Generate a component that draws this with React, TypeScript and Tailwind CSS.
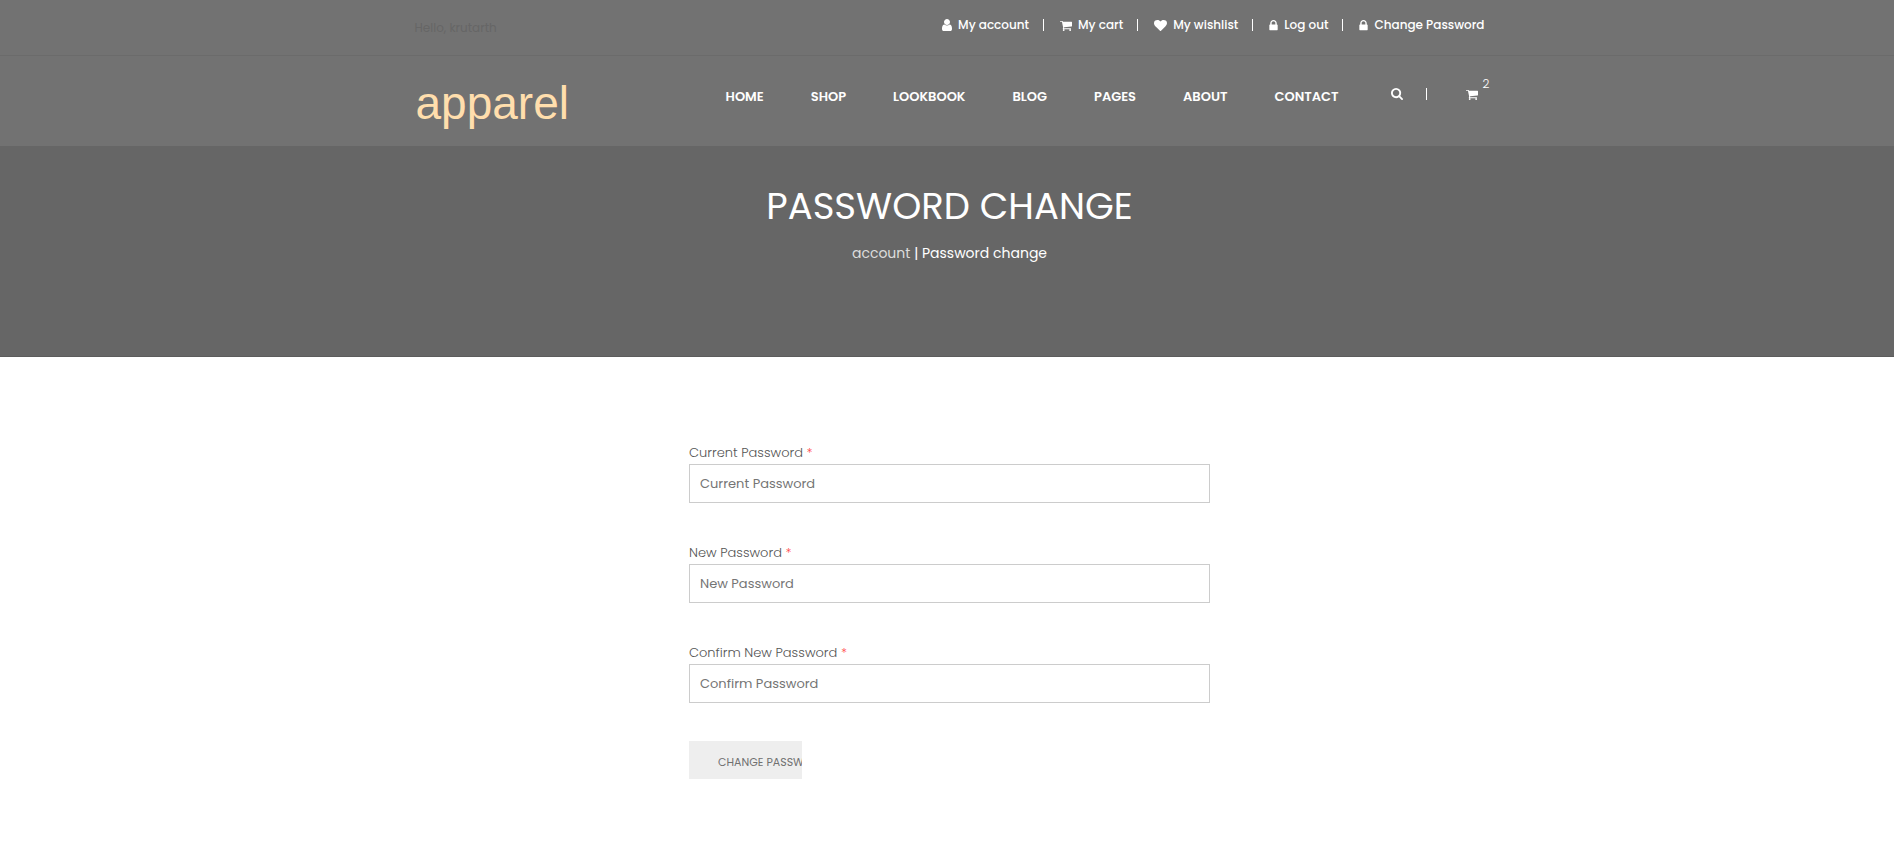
import React from "react";

const ICONS = {
  user: {
    box: "256 0 1280 1792",
    size: "h-[14px] w-[10px]",
    d: "M1536 1399q0 109-62.5 187t-150.5 78h-854q-88 0-150.5-78t-62.5-187q0-85 8.5-160.5t31.5-152 58.5-131 94-89 134.5-34.5q131 128 313 128t313-128q76 0 134.5 34.5t94 89 58.5 131 31.5 152 8.5 160.5zm-256-887q0 159-112.5 271.5t-271.5 112.5-271.5-112.5-112.5-271.5 112.5-271.5 271.5-112.5 271.5 112.5 112.5 271.5z",
  },
  cart: {
    box: "64 0 1664 1792",
    size: "h-[13px] w-[12px]",
    d: "M704 1536q0 52-38 90t-90 38-90-38-38-90 38-90 90-38 90 38 38 90zm896 0q0 52-38 90t-90 38-90-38-38-90 38-90 90-38 90 38 38 90zm128-1088v512q0 24-16.500 42.500t-40.500 21.500l-1044 122q13 60 13 70 0 16-24 64h920q26 0 45 19t19 45-19 45-45 19h-1024q-26 0-45-19t-19-45q0-11 8-31.500t16-36 21.500-40 15.500-29.500l-177-823h-204q-26 0-45-19t-19-45 19-45 45-19h256q16 0 28.500 6.500t19.500 15.500 13 24.500 8 26 5.500 29.500 4.500 26h1201q26 0 45 19t19 45z",
  },
  heart: {
    box: "0 0 1792 1792",
    size: "size-[13px]",
    d: "M896 1664q-26 0-44-18l-624-602q-10-8-27.500-26t-55.500-65.500-68-97.500-53.500-121-23.500-138q0-220 127-344t351-124q62 0 126.500 21.500t120 58 95.500 68.500 76 68q36-36 76-68t95.500-68.500 120-58 126.500-21.500q224 0 351 124t127 344q0 221-229 450l-623 600q-18 18-44 18z",
  },
  lock: {
    box: "320 0 1152 1792",
    size: "h-[13px] w-[9px]",
    d: "M640 768h512v-192q0-106-75-181t-181-75-181 75-75 181v192zm832 96v576q0 40-28 68t-68 28h-960q-40 0-68-28t-28-68v-576q0-40 28-68t68-28h32v-192q0-184 132-316t316-132 316 132 132 316v192h32q40 0 68 28t28 68z",
  },
  search: {
    box: "64 128 1664 1664",
    size: "size-[12px]",
    d: "M1216 832q0-185-131.500-316.500t-316.500-131.500-316.500 131.500-131.500 316.500 131.500 316.500 316.500 131.500 316.500-131.500 131.500-316.500zm512 832q0 52-38 90t-90 38q-54 0-90-38l-343-342q-179 124-399 124-143 0-273.500-55.500t-225-150-150-225-55.500-273.500 55.500-273.500 150-225 225-150 273.500-55.500 273.500 55.500 225 150 150 225 55.500 273.500q0 220-124 399l343 343q37 37 37 90z",
  },
};

type IconName = keyof typeof ICONS;

function Icon({ name }: { name: IconName }) {
  const { box, size, d } = ICONS[name];
  return (
    <svg viewBox={box} className={`${size} shrink-0 fill-current`} aria-hidden="true">
      <path d={d} />
    </svg>
  );
}

const accountLinks: { icon: IconName; label: string }[] = [
  { icon: "user", label: "My account" },
  { icon: "cart", label: "My cart" },
  { icon: "heart", label: "My wishlist" },
  { icon: "lock", label: "Log out" },
  { icon: "lock", label: "Change Password" },
];

const navLinks = ["HOME", "SHOP", "LOOKBOOK", "BLOG", "PAGES", "ABOUT", "CONTACT"];

const fields = [
  { id: "current", label: "Current Password", placeholder: "Current Password" },
  { id: "new", label: "New Password", placeholder: "New Password" },
  { id: "confirm", label: "Confirm New Password", placeholder: "Confirm Password" },
];

export default function App() {
  return (
    <div className="min-h-screen bg-white font-['Poppins','Inter',sans-serif]">
      <header className="bg-[#727272] text-white">
        <div className="border-b border-[#6b6b6b] pl-[5px]">
          <div className="mx-auto flex h-[55px] max-w-[1070px] justify-between">
            <p className="pt-[18px] text-[12px] leading-5 text-[#666]">Hello, krutarth</p>
            <ul className="flex h-[50px] items-center text-[12px] leading-5 font-medium">
              {accountLinks.map(({ icon, label }, i) => (
                <li key={label} className="flex items-center">
                  {i > 0 && <span className="mr-4 ml-[14px] h-3 w-px bg-white" />}
                  <a href="#" className="flex items-center gap-[6px]">
                    <Icon name={icon} />
                    {label}
                  </a>
                </li>
              ))}
            </ul>
          </div>
        </div>
        <div className="pl-[5px]">
          <div className="mx-auto flex h-[90px] max-w-[1070px] items-start justify-between">
            <a
              href="#"
              className="pt-5 pl-px font-['Liberation_Sans',Arial,sans-serif] text-[46px] leading-[54px] text-[#ffdead]"
            >
              apparel
            </a>
            <div className="flex pt-[30px]">
              <nav className="flex gap-[47px] pt-px text-[13px] leading-5 font-semibold">
                {navLinks.map((label) => (
                  <a key={label} href="#">
                    {label}
                  </a>
                ))}
              </nav>
              <div className="ml-[52px] flex h-4 items-center">
                <button type="button" aria-label="Search">
                  <Icon name="search" />
                </button>
                <span className="mr-[39px] ml-[23px] h-3 w-px bg-white" />
                <a href="#" aria-label="Cart, 2 items" className="relative mr-[7px]">
                  <Icon name="cart" />
                  <span className="absolute -top-3 left-[17px] text-[12px] leading-4 font-light">2</span>
                </a>
              </div>
            </div>
          </div>
        </div>
      </header>

      <section className="h-[211px] border-b border-[#5c5c5c] bg-[#666] pt-9 pl-[5px] text-center text-white">
        <h1 className="text-[37px] leading-[48px] font-normal">PASSWORD CHANGE</h1>
        <p className="mt-[11px] text-[14px] leading-6">
          <a href="#" className="text-[#ddd]">
            account
          </a>{" "}
          | Password change
        </p>
      </section>

      <main className="pt-[85px] pb-20 pl-[5px]">
        <form className="mx-auto max-w-[521px]" onSubmit={(e) => e.preventDefault()}>
          <div className="space-y-[39px]">
            {fields.map(({ id, label, placeholder }) => (
              <div key={id}>
                <label htmlFor={id} className="block pt-px pb-px text-[13px] leading-5 font-light text-[#555]">
                  {label} <span className="text-[#f44]">*</span>
                </label>
                <input
                  id={id}
                  type="password"
                  placeholder={placeholder}
                  className="block h-[39px] w-full border border-[#ccc] px-[10px] text-[13px] text-[#444] outline-none placeholder:text-[#757575]"
                />
              </div>
            ))}
          </div>
          <button
            type="submit"
            className="mt-[38px] block h-[38px] w-[113px] overflow-hidden bg-[#eee] pt-1 pl-[29px] text-left text-[11px] leading-4 whitespace-nowrap text-[#707070]"
          >
            CHANGE PASSWORD
          </button>
        </form>
      </main>
    </div>
  );
}
